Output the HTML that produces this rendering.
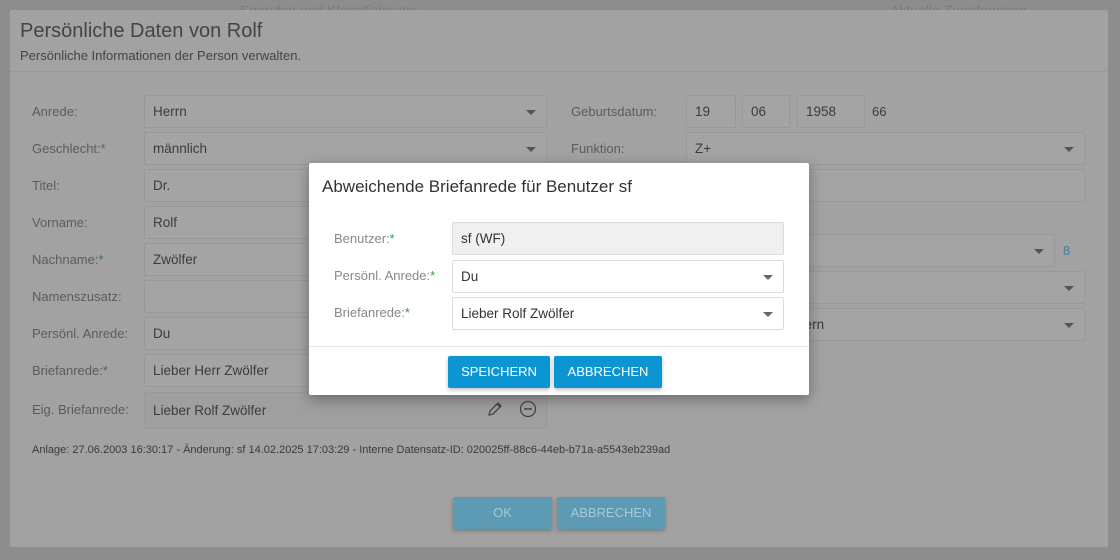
<!DOCTYPE html>
<html><head><meta charset="utf-8"><style>
*{box-sizing:border-box;margin:0;padding:0}
body{width:1120px;height:560px;overflow:hidden;background:#8d8d8d;font-family:"Liberation Sans",sans-serif;position:relative;font-size:13px;color:#3a3a3a}
.a{position:absolute}
.dlg{left:10px;top:10px;width:1098px;height:537px;background:#a2a2a2;border-radius:2px}
.lbl{color:#5c5c5c;font-size:13px}
.inp{border:1px solid #999;background:#a4a4a4;height:33px;padding:0 8px;line-height:31px;color:#3c3c3c;font-size:13.5px;border-radius:2px}
.car::after{content:"";position:absolute;right:10px;top:14px;border-left:5px solid transparent;border-right:5px solid transparent;border-top:5px solid #555}
.g{color:#3a7a3a}
.m .inp{border-color:#ddd;background:#fff;color:#333}
.m .lbl{color:#888}
.m .car::after{border-top-color:#666}
.m .g{color:#3a9a3a}
.btn{background:#0b96d3;color:#fff;font-size:13px;text-align:center;line-height:32px;height:32px;border-radius:2px;box-shadow:0 2px 4px rgba(0,0,0,.25)}
.bd{background:#5d9ab4;color:#a9c9d8}
</style></head><body>
<div class="a" style="left:240px;top:2px;color:#7a7a7a;font-size:14px">Spenden und Klassifizierung</div>
<div class="a" style="left:890px;top:2px;color:#7a7a7a;font-size:14px">Aktuelle Zuordnungen</div>
<div class="a dlg">
 <div class="a" style="left:10px;top:10px;font-size:20px;color:#444">Persönliche Daten von Rolf</div>
 <div class="a" style="left:10px;top:38px;font-size:13px;color:#444">Persönliche Informationen der Person verwalten.</div>
 <div class="a" style="left:0;top:61px;width:1098px;border-top:1px solid #999"></div>
</div>
<div class="a lbl" style="left:32px;top:104px">Anrede:</div>
<div class="a inp car" style="left:144px;top:95px;width:403px">Herrn</div>
<div class="a lbl" style="left:32px;top:141px">Geschlecht:<span class="g">*</span></div>
<div class="a inp car" style="left:144px;top:132px;width:403px">männlich</div>
<div class="a lbl" style="left:32px;top:178px">Titel:</div>
<div class="a inp" style="left:144px;top:169px;width:403px">Dr.</div>
<div class="a lbl" style="left:32px;top:215px">Vorname:</div>
<div class="a inp" style="left:144px;top:206px;width:403px">Rolf</div>
<div class="a lbl" style="left:32px;top:252px">Nachname:<span class="g">*</span></div>
<div class="a inp" style="left:144px;top:243px;width:403px">Zwölfer</div>
<div class="a lbl" style="left:32px;top:289px">Namenszusatz:</div>
<div class="a inp" style="left:144px;top:280px;width:403px"></div>
<div class="a lbl" style="left:32px;top:326px">Persönl. Anrede:</div>
<div class="a inp" style="left:144px;top:317px;width:403px">Du</div>
<div class="a lbl" style="left:32px;top:363px">Briefanrede:*</div>
<div class="a inp" style="left:144px;top:354px;width:403px">Lieber Herr Zwölfer</div>
<div class="a lbl" style="left:32px;top:402px">Eig. Briefanrede:</div>
<div class="a inp" style="left:144px;top:392px;width:403px;height:37px;line-height:35px;background:#9f9f9f">Lieber Rolf Zwölfer</div>
<svg class="a" style="left:486px;top:400px" width="18" height="18" viewBox="0 0 18 18"><path d="M3 15l1-4 8-8 3 3-8 8z M11 4l3 3" fill="none" stroke="#444" stroke-width="1.3"/></svg>
<svg class="a" style="left:519px;top:400px" width="18" height="18" viewBox="0 0 18 18"><circle cx="9" cy="9" r="7.5" fill="none" stroke="#444" stroke-width="1.3"/><path d="M5 9h8" stroke="#444" stroke-width="1.5"/></svg>
<div class="a" style="left:32px;top:444px;font-size:11px;color:#3a3a3a">Anlage: 27.06.2003 16:30:17 - Änderung: sf 14.02.2025 17:03:29 - Interne Datensatz-ID: 020025ff-88c6-44eb-b71a-a5543eb239ad</div>
<div class="a lbl" style="left:571px;top:104px">Geburtsdatum:</div>
<div class="a inp" style="left:686px;top:95px;width:50px">19</div>
<div class="a inp" style="left:742px;top:95px;width:48px">06</div>
<div class="a inp" style="left:797px;top:95px;width:68px">1958</div>
<div class="a" style="left:872px;top:104px;color:#3c3c3c">66</div>
<div class="a lbl" style="left:571px;top:141px">Funktion:</div>
<div class="a inp car" style="left:686px;top:132px;width:399px">Z+</div>
<div class="a inp" style="left:686px;top:169px;width:399px"></div>
<div class="a inp car" style="left:686px;top:234px;width:369px"></div>
<div class="a" style="left:1063px;top:243px;color:#3f7f99">8</div>
<div class="a inp car" style="left:686px;top:271px;width:399px"></div>
<div class="a inp car" style="left:686px;top:308px;width:399px">Postfach bei Häusern</div>
<div class="a btn bd" style="left:453px;top:497px;width:99px">OK</div>
<div class="a btn bd" style="left:557px;top:497px;width:108px">ABBRECHEN</div>
<div class="a m" style="left:309px;top:163px;width:500px;height:232px;background:#fff;border-radius:2px;box-shadow:0 4px 14px rgba(0,0,0,.35)">
 <div class="a" style="left:13px;top:14px;font-size:17px;color:#333">Abweichende Briefanrede für Benutzer sf</div>
 <div class="a lbl" style="left:25px;top:68px">Benutzer:<span class="g">*</span></div>
 <div class="a inp" style="left:143px;top:59px;width:332px;background:#f0f0f0">sf (WF)</div>
 <div class="a lbl" style="left:25px;top:105px">Persönl. Anrede:<span class="g">*</span></div>
 <div class="a inp car" style="left:143px;top:97px;width:332px">Du</div>
 <div class="a lbl" style="left:25px;top:142px">Briefanrede:<span class="g">*</span></div>
 <div class="a inp car" style="left:143px;top:134px;width:332px">Lieber Rolf Zwölfer</div>
 <div class="a" style="left:0;top:183px;width:500px;border-top:1px solid #e5e5e5"></div>
 <div class="a btn" style="left:139px;top:193px;width:102px">SPEICHERN</div>
 <div class="a btn" style="left:245px;top:193px;width:108px">ABBRECHEN</div>
</div>
</body></html>
